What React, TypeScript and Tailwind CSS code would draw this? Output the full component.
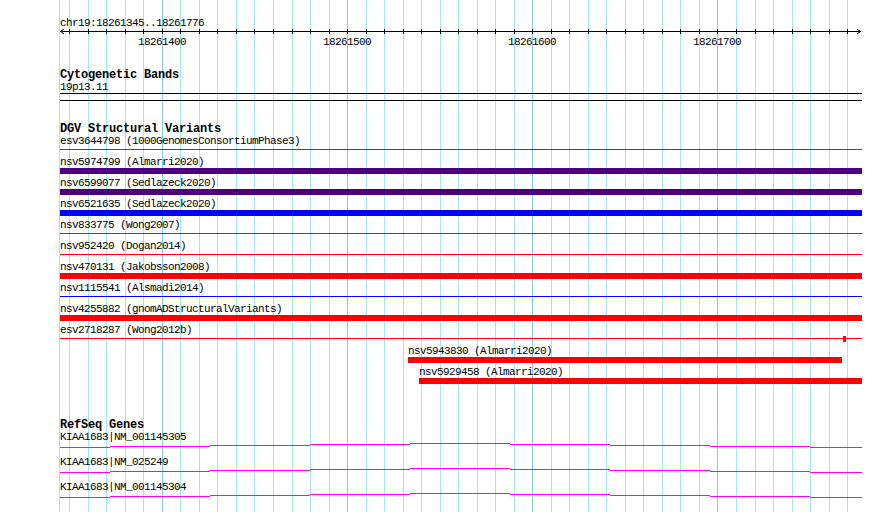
const START = 18261345;
const PX_PER_BP = 1.852;
const TRACK_W = 802;

// x position inside the track area (track area starts at page x = 60)
const xOf = (bp: number) => Math.round((bp - START) * PX_PER_BP);

const gridBps: number[] = [];
for (let bp = 18261350; bp <= 18261770; bp += 10) gridBps.push(bp);

const tickLabels = [18261400, 18261500, 18261600, 18261700];

type Variant = {
  name: string;
  kind: 'line' | 'bar';
  color: string;
  start?: number;
  end?: number;
  block?: number;
};

const variants: Variant[] = [
  { name: 'esv3644798 (1000GenomesConsortiumPhase3)', kind: 'line', color: '#ff0000' },
  { name: 'nsv5974799 (Almarri2020)', kind: 'bar', color: '#4b0082' },
  { name: 'nsv6599077 (Sedlazeck2020)', kind: 'bar', color: '#4b0082' },
  { name: 'nsv6521635 (Sedlazeck2020)', kind: 'bar', color: '#0000ff' },
  { name: 'nsv833775 (Wong2007)', kind: 'line', color: '#ff0000' },
  { name: 'nsv952420 (Dogan2014)', kind: 'line', color: '#ff0000' },
  { name: 'nsv470131 (Jakobsson2008)', kind: 'bar', color: '#ff0000' },
  { name: 'nsv1115541 (Alsmadi2014)', kind: 'line', color: '#0000ff' },
  { name: 'nsv4255882 (gnomADStructuralVariants)', kind: 'bar', color: '#ff0000' },
  { name: 'esv2718287 (Wong2012b)', kind: 'line', color: '#ff0000', block: 783 },
  { name: 'nsv5943830 (Almarri2020)', kind: 'bar', color: '#ff0000', start: 348, end: 782 },
  { name: 'nsv5929458 (Almarri2020)', kind: 'bar', color: '#ff0000', start: 359 },
];

const genes = ['KIAA1683|NM_001145305', 'KIAA1683|NM_025249', 'KIAA1683|NM_001145304'];

// stepped intron "hat" drawn across the view
const hat: [number, number, number][] = [
  [0, 50, 4],
  [50, 150, 3],
  [150, 250, 2],
  [250, 350, 1],
  [350, 450, 0],
  [450, 550, 1],
  [550, 650, 2],
  [650, 750, 3],
  [750, 802, 4],
];

const Title = ({ children }: { children: string }) => (
  <div className="h-[12px] font-bold text-[12px] tracking-[-0.2px] whitespace-nowrap">{children}</div>
);

const VariantRow = ({ v }: { v: Variant }) => {
  const start = v.start ?? 0;
  const end = v.end ?? TRACK_W;
  return (
    <div className="flex flex-col">
      <div className="h-[12px] whitespace-nowrap" style={{ paddingLeft: start }}>
        {v.name}
      </div>
      <div className="relative h-[6px]">
        {v.kind === 'bar' ? (
          <div className="absolute inset-y-0" style={{ left: start, width: end - start, background: v.color }} />
        ) : (
          <div className="absolute top-[2px] h-px" style={{ left: start, width: end - start, background: v.color }} />
        )}
        {v.block !== undefined && (
          <div className="absolute inset-y-0 w-[3px]" style={{ left: v.block, background: v.color }} />
        )}
      </div>
    </div>
  );
};

const GeneRow = ({ name }: { name: string }) => (
  <div className="flex flex-col">
    <div className="h-[12px] whitespace-nowrap">{name}</div>
    <svg width={TRACK_W} height={13} className="block" shapeRendering="crispEdges">
      {hat.map(([x1, x2, dy]) => (
        <line key={x1} x1={x1} x2={x2} y1={dy + 0.5} y2={dy + 0.5} stroke="#ff00ff" strokeWidth={1} />
      ))}
    </svg>
  </div>
);

export default function App() {
  return (
    <div className="relative w-[890px] h-[512px] overflow-hidden bg-white text-black font-['Liberation_Mono',monospace] text-[11px] leading-[12px] tracking-[-0.6px]">
      {/* vertical grid */}
      <div className="absolute inset-y-0 left-[60px] w-[802px]">
        <div className="absolute inset-y-0 left-[-1px] w-px bg-[#a8e6ee]" />
        {gridBps.map((bp) => (
          <div
            key={bp}
            className={`absolute inset-y-0 w-px ${bp % 100 === 0 ? 'bg-[#8ccbe6]' : 'bg-[#a8e6ee]'}`}
            style={{ left: xOf(bp) }}
          />
        ))}
      </div>

      <div className="relative ml-[60px] flex w-[802px] flex-col pt-[17px]">
        {/* ruler */}
        <section className="flex flex-col">
          <div className="h-[12px] whitespace-nowrap">chr19:18261345..18261776</div>
          <svg width={TRACK_W} height={7} className="block" shapeRendering="crispEdges">
            <line x1={0} x2={801} y1={2.5} y2={2.5} stroke="#000" />
            {gridBps.map((bp) => (
              <line key={bp} x1={xOf(bp) + 0.5} x2={xOf(bp) + 0.5} y1={0} y2={5} stroke="#000" />
            ))}
            <polyline points="4,0 0.5,2.5 4,5" fill="none" stroke="#000" shapeRendering="auto" />
            <polyline points="797,0 800.5,2.5 797,5" fill="none" stroke="#000" shapeRendering="auto" />
          </svg>
          <div className="relative h-[12px]">
            {tickLabels.map((bp) => (
              <span key={bp} className="absolute top-0 whitespace-nowrap" style={{ left: xOf(bp) - 24 }}>
                {bp}
              </span>
            ))}
          </div>
        </section>

        {/* cytogenetic bands */}
        <section className="mt-[21px] flex flex-col">
          <Title>Cytogenetic Bands</Title>
          <div className="h-[12px]">19p13.11</div>
          <div className="h-[8px] border-y border-black" />
        </section>

        {/* DGV */}
        <section className="mt-[22px] flex flex-col">
          <Title>DGV Structural Variants</Title>
          <div className="flex flex-col gap-[3px]">
            {variants.map((v) => (
              <VariantRow key={v.name} v={v} />
            ))}
          </div>
        </section>

        {/* RefSeq */}
        <section className="mt-[35px] flex flex-col">
          <Title>RefSeq Genes</Title>
          {genes.map((g) => (
            <GeneRow key={g} name={g} />
          ))}
        </section>
      </div>
    </div>
  );
}
